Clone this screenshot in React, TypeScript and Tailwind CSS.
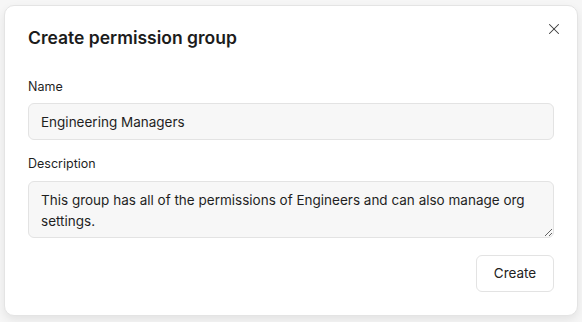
import { X } from "lucide-react";

export default function App() {
  return (
    <div
      className="h-[322px] w-[582px] overflow-hidden bg-[#f6f6f6] px-[4px] pt-[5px]"
      style={{ fontFamily: "Inter, 'Noto Sans', sans-serif" }}
    >
      <div className="relative flex h-[311px] w-[574px] flex-col rounded-[10px] border border-[#e4e4e4] bg-white px-[23px] pt-[18px] shadow-[0_4px_10px_rgba(0,0,0,0.08)]">
        <button
          type="button"
          aria-label="Close"
          className="absolute right-[14px] top-[14px] flex h-[18px] w-[18px] items-center justify-center text-[#3a3a3a]"
        >
          <X className="h-[18px] w-[18px]" strokeWidth={1.4} />
        </button>
        <h2 className="text-[17.5px] font-semibold leading-7 text-[#1c1c1c]">Create permission group</h2>

        <label className="mt-[25px] text-[12.5px] leading-5 text-[#1f1f1f]">Name</label>
        <input
          defaultValue="Engineering Managers"
          className="mt-[6px] h-[37px] w-full rounded-md border border-[#e3e3e3] bg-[#f7f7f7] px-3 text-[13.5px] text-[#1f1f1f] outline-none"
        />

        <label className="mt-[14px] text-[12.5px] leading-5 text-[#1f1f1f]">Description</label>
        <textarea
          defaultValue="This group has all of the permissions of Engineers and can also manage org settings."
          className="mt-[7px] h-[57px] w-full resize-y rounded-md border border-[#e3e3e3] bg-[#f7f7f7] px-3 pt-[8px] pb-1 text-[13.5px] leading-[21px] text-[#1f1f1f] outline-none"
        />

        <div className="mt-[17px] flex justify-end">
          <button
            type="button"
            className="h-[37px] w-[78px] rounded-md border border-[#e3e3e3] bg-white text-[13.5px] text-[#222]"
          >
            Create
          </button>
        </div>
      </div>
    </div>
  );
}
